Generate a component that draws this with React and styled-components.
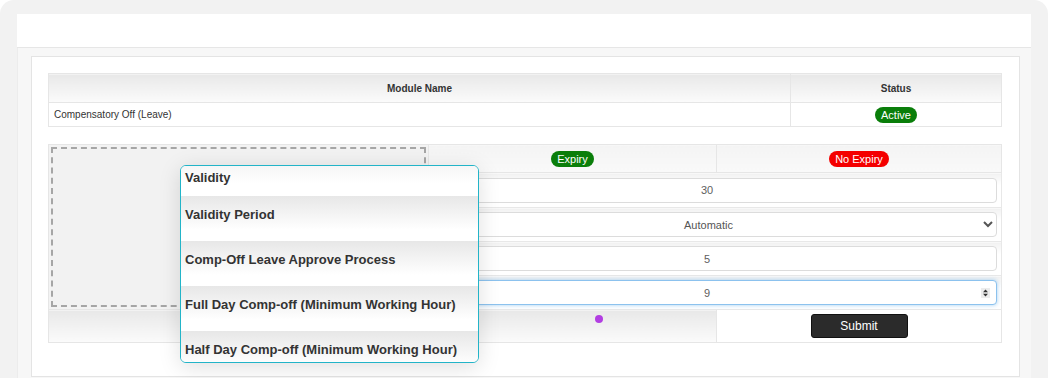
import React from 'react';
import styled, { createGlobalStyle } from 'styled-components';

const GlobalStyle = createGlobalStyle`
  html, body {
    margin: 0;
    padding: 0;
    background: #ffffff;
  }
  body {
    font-family: "Liberation Sans", Arial, sans-serif;
    color: #333;
  }
  * {
    box-sizing: border-box;
  }
`;

const Frame = styled.div`
  height: 378px;
  overflow: hidden;
  background: #f2f2f2;
  border-radius: 14px 14px 0 0;
  padding: 14px 17px 0 17px;
  display: flex;
  flex-direction: column;
`;

const TopBar = styled.div`
  height: 34px;
  background: #fff;
  border-bottom: 1px solid #e6e6e6;
`;

const Body = styled.div`
  flex: 1;
  background: #f7f7f7;
  border-left: 1px solid #ececec;
  padding: 8px 11px 0 13px;
`;

const Card = styled.div`
  position: relative;
  background: #fff;
  border: 1px solid #e4e4e4;
  padding: 16px 17px 33px 16px;
`;

const Table = styled.table`
  width: 100%;
  border-collapse: collapse;
  table-layout: fixed;
  font-size: 10px;
  color: #333;
  margin-bottom: ${(p) => p.$gap || 0}px;
`;

const HeadCell = styled.th`
  height: 29px;
  border: 1px solid #e6e6e6;
  background: linear-gradient(#e8e8e8, #fbfbfb);
  font-weight: bold;
  text-align: center;
  padding: 0;
`;

const Cell = styled.td`
  height: 24px;
  border: 1px solid #e6e6e6;
  padding: 0 5px;
  text-align: ${(p) => p.$align || 'left'};
`;

const Pill = styled.span`
  display: inline-block;
  height: 16px;
  line-height: 16px;
  padding: 0 6px;
  border-radius: 9px;
  color: #fff;
  font-size: 11px;
  background: ${(p) => (p.$tone === 'red' ? '#f40000' : '#0a7e0a')};
`;

const OptionHead = styled.th`
  height: 28px;
  border: 1px solid #e6e6e6;
  background: linear-gradient(#f4f4f4, #f9f9f9);
  font-weight: normal;
  text-align: center;
  padding: 0;
`;

const PlaceholderCell = styled.td`
  border: 1px solid #e6e6e6;
  background: #f3f3f3;
  padding: 2px;
  vertical-align: top;
`;

const Placeholder = styled.div`
  height: 160px;
  border: 2px dashed #a6a6a6;
  background: #f2f2f2;
`;

const FieldCell = styled.td`
  height: ${(p) => p.$h || 34}px;
  border: 1px solid #e8e8e8;
  background: linear-gradient(#f1f1f1, #ffffff 35%);
  padding: 0 4px 0 3px;
  vertical-align: middle;
`;

const FieldWrap = styled.div`
  position: relative;
`;

const NumberInput = styled.input`
  display: block;
  width: 100%;
  height: 25px;
  border: 1px solid ${(p) => (p.$active ? '#8cc2ee' : '#dcdcdc')};
  border-radius: 4px;
  box-shadow: ${(p) => (p.$active ? '0 0 4px rgba(102, 175, 233, 0.6)' : 'none')};
  background: #fff;
  color: #606060;
  font-family: "Liberation Sans", Arial, sans-serif;
  font-size: 11px;
  text-align: center;
  padding: 0 6px;
  outline: none;

  &::-webkit-inner-spin-button {
    opacity: 0;
  }
`;

const Spinner = styled.svg`
  position: absolute;
  right: 7px;
  top: 8px;
  width: 9px;
  height: 10px;
  pointer-events: none;
`;

const Select = styled.select`
  display: block;
  width: 100%;
  height: 25px;
  border: 1px solid #dcdcdc;
  border-radius: 4px;
  background: #fff;
  color: #555;
  font-family: "Liberation Sans", Arial, sans-serif;
  font-size: 11px;
  text-align: center;
  text-align-last: center;
  padding: 0 4px;
  outline: none;
`;

const FootCell = styled.td`
  height: 33px;
  border: 1px solid #e6e6e6;
  background: ${(p) => (p.$plain ? '#fff' : 'linear-gradient(#e8e8e8, #fbfbfb)')};
  padding: 0;
  vertical-align: ${(p) => (p.$plain ? 'middle' : 'top')};
  text-align: ${(p) => (p.$plain ? 'center' : 'left')};
`;

const Dot = styled.span`
  display: block;
  width: 8px;
  height: 8px;
  margin: 5px 0 0 166px;
  border-radius: 50%;
  background: #b23ee2;
`;

const SubmitButton = styled.button`
  width: 97px;
  height: 24px;
  border: 1px solid #111;
  border-radius: 3px;
  background: #2b2b2b;
  color: #fff;
  font-family: "Liberation Sans", Arial, sans-serif;
  font-size: 12px;
  cursor: pointer;
`;

const DragGhost = styled.div`
  position: absolute;
  left: 148px;
  top: 108px;
  width: 299px;
  height: 198px;
  overflow: hidden;
  background: #fff;
  border: 1px solid #22b4c8;
  border-radius: 6px;
  box-shadow: 0 4px 22px rgba(0, 0, 0, 0.13);
`;

const GhostItem = styled.div`
  height: ${(p) => (p.$first ? 30 : 45)}px;
  padding: ${(p) => (p.$first ? 4 : 11)}px 4px 0;
  background: ${(p) => (p.$first
    ? 'linear-gradient(#f6f6f6, #ffffff 60%)'
    : 'linear-gradient(#e7e7e7, #ffffff 75%)')};
  font-size: 13px;
  line-height: 15px;
  font-weight: bold;
  color: #333;
  white-space: nowrap;
`;

const ghostItems = [
  'Validity',
  'Validity Period',
  'Comp-Off Leave Approve Process',
  'Full Day Comp-off (Minimum Working Hour)',
  'Half Day Comp-off (Minimum Working Hour)',
];

export default function App() {
  return (
    <>
      <GlobalStyle />
      <Frame>
        <TopBar />
        <Body>
          <Card>
            <Table $gap={17}>
              <colgroup>
                <col style={{ width: 742 }} />
                <col style={{ width: 211 }} />
              </colgroup>
              <thead>
                <tr>
                  <HeadCell>Module Name</HeadCell>
                  <HeadCell>Status</HeadCell>
                </tr>
              </thead>
              <tbody>
                <tr>
                  <Cell>Compensatory Off (Leave)</Cell>
                  <Cell $align="center"><Pill>Active</Pill></Cell>
                </tr>
              </tbody>
            </Table>

            <Table>
              <colgroup>
                <col style={{ width: 380 }} />
                <col style={{ width: 288 }} />
                <col style={{ width: 285 }} />
              </colgroup>
              <tbody>
                <tr>
                  <PlaceholderCell rowSpan={5}><Placeholder /></PlaceholderCell>
                  <OptionHead><Pill>Expiry</Pill></OptionHead>
                  <OptionHead><Pill $tone="red">No Expiry</Pill></OptionHead>
                </tr>
                <tr>
                  <FieldCell colSpan={2} $h={35}>
                    <NumberInput type="number" defaultValue={30} />
                  </FieldCell>
                </tr>
                <tr>
                  <FieldCell colSpan={2}>
                    <Select defaultValue="Automatic">
                      <option>Automatic</option>
                      <option>Manual</option>
                    </Select>
                  </FieldCell>
                </tr>
                <tr>
                  <FieldCell colSpan={2}>
                    <NumberInput type="number" defaultValue={5} />
                  </FieldCell>
                </tr>
                <tr>
                  <FieldCell colSpan={2}>
                    <FieldWrap>
                      <NumberInput type="number" defaultValue={9} $active />
                      <Spinner viewBox="0 0 9 10">
                        <rect x="0" y="0" width="9" height="10" fill="#ececec" />
                        <path d="M4.5 1.6 L7 4.2 H2 Z" fill="#333" />
                        <path d="M4.5 8.4 L7 5.8 H2 Z" fill="#333" />
                      </Spinner>
                    </FieldWrap>
                  </FieldCell>
                </tr>
                <tr>
                  <FootCell />
                  <FootCell><Dot /></FootCell>
                  <FootCell $plain><SubmitButton>Submit</SubmitButton></FootCell>
                </tr>
              </tbody>
            </Table>

            <DragGhost>
              {ghostItems.map((label, i) => (
                <GhostItem key={label} $first={i === 0}>{label}</GhostItem>
              ))}
            </DragGhost>
          </Card>
        </Body>
      </Frame>
    </>
  );
}
